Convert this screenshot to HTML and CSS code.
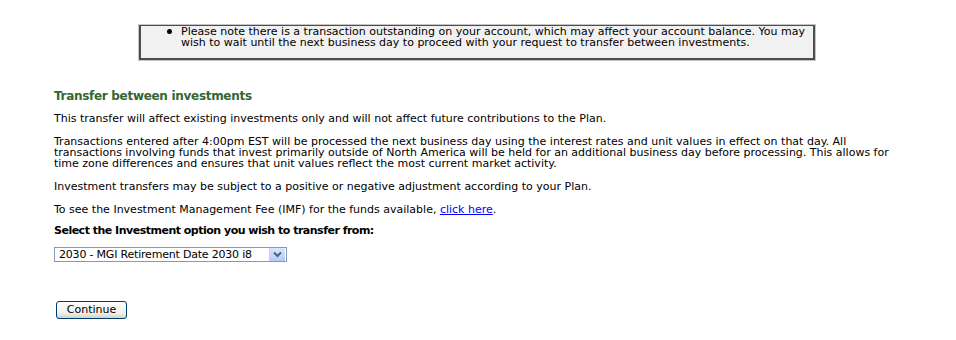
FILE: index.html
```html
<!DOCTYPE html>
<html>
<head>
<meta charset="utf-8">
<link rel="stylesheet" href="styles.css">
</head>
<body>
<div class="notice-wrap">
  <div class="notice">
    <div class="notice-item">
      <span class="bullet"></span>
      <span class="notice-text">Please note there is a transaction outstanding on your account, which may affect your account balance. You may wish to wait until the next business day to proceed with your request to transfer between investments.</span>
    </div>
  </div>
</div>
<div class="content">
  <h2 class="title">Transfer between investments</h2>
  <p class="para first">This transfer will affect existing investments only and will not affect future contributions to the Plan.</p>
  <p class="para">Transactions entered after 4:00pm EST will be processed the next business day using the interest rates and unit values in effect on that day. All transactions involving funds that invest primarily outside of North America will be held for an additional business day before processing. This allows for time zone differences and ensures that unit values reflect the most current market activity.</p>
  <p class="para">Investment transfers may be subject to a positive or negative adjustment according to your Plan.</p>
  <p class="para">To see the Investment Management Fee (IMF) for the funds available, <a class="link" href="#">click here</a>.</p>
  <p class="para label">Select the Investment option you wish to transfer from:</p>
  <div class="select-wrap">
    <select class="select">
      <option>2030 - MGI Retirement Date 2030 i8</option>
    </select>
    <span class="select-btn">
      <svg width="9" height="7" viewBox="0 0 9 7"><path d="M1 1.5 L4.5 5 L8 1.5" fill="none" stroke="#4d6185" stroke-width="2"/></svg>
    </span>
  </div>
  <div class="actions">
    <button class="btn" type="button">Continue</button>
  </div>
</div>
</body>
</html>
```
FILE: styles.css
```css
html, body {
  margin: 0;
  padding: 0;
  background: #ffffff;
}
body {
  font-family: "DejaVu Sans", Verdana, sans-serif;
  font-size: 11px;
  color: #000000;
  width: 956px;
}
.notice-wrap {
  padding-top: 24px;
}
.notice {
  width: 676px;
  margin: 0 0 0 138px;
  border: 1px solid #c6c6c6;
  background: #f1f1f1;
  box-shadow: inset 2px 1px 0 #4d4d4d, inset -2px -2px 0 #4d4d4d;
  height: 35px;
  box-sizing: content-box;
}
.notice-item {
  display: flex;
  align-items: flex-start;
  padding: 1px 6px 0 28px;
  line-height: 11px;
}
.bullet {
  flex: none;
  width: 5px;
  height: 5px;
  border-radius: 50%;
  background: #000000;
  margin: 3px 9px 0 0;
}
.notice-text {
  flex: 1;
}
.content {
  padding: 0 56px 0 54px;
}
.title {
  margin: 28px 0 0 0;
  font-size: 12px;
  font-weight: bold;
  color: #336633;
  line-height: 14px;
  letter-spacing: -0.3px;
}
.para {
  margin: 12px 0 0 0;
  line-height: 11px;
}
.para.first {
  margin-top: 10px;
}
.label {
  font-weight: bold;
  letter-spacing: -0.5px;
  margin-top: 10px;
}
.link {
  color: #0000ff;
  text-decoration: underline;
}
.select-wrap {
  position: relative;
  width: 233px;
  margin-top: 11px;
}
.select {
  -webkit-appearance: none;
  appearance: none;
  width: 233px;
  height: 15px;
  border: 1px solid #7f9db9;
  border-radius: 0;
  background: #ffffff;
  font-family: "DejaVu Sans", Verdana, sans-serif;
  font-size: 11px;
  letter-spacing: -0.2px;
  color: #000000;
  padding: 0 0 0 4px;
  margin: 0;
  line-height: 13px;
  display: block;
}
.select-btn {
  position: absolute;
  right: 2px;
  top: 1px;
  width: 15px;
  height: 13px;
  background: linear-gradient(#dce6fb, #b7c9f5);
  border-left: 1px solid #c3d3fd;
  display: flex;
  align-items: center;
  justify-content: center;
  pointer-events: none;
}
.actions {
  margin-top: 39px;
  padding-left: 2px;
}
.btn {
  display: block;
  width: 71px;
  height: 18px;
  border: 1px solid #003c74;
  border-radius: 3px;
  background: linear-gradient(#ffffff, #f0f0ea 70%, #d6d0c5);
  font-family: "DejaVu Sans", Verdana, sans-serif;
  font-size: 11px;
  color: #000000;
  padding: 0;
  margin: 0;
  line-height: 14px;
}
```
